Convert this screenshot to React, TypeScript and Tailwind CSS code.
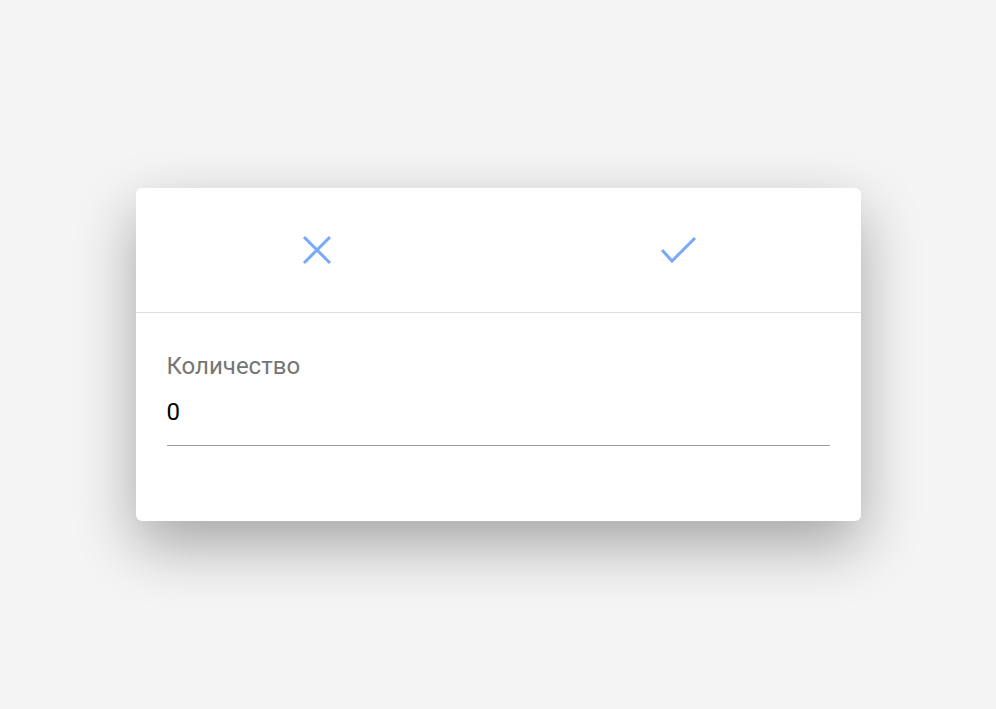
import React from "react";

export default function App() {
  return (
    <div
      className="w-full h-[709px] bg-[#f4f4f4] flex items-center justify-center"
      style={{ fontFamily: "Roboto, 'Noto Sans', sans-serif" }}
    >
      <div className="w-[725px] h-[333px] bg-white rounded-[6px] shadow-[0_24px_60px_rgba(0,0,0,0.32)] flex flex-col">
        <div className="h-[125px] flex border-b border-[#e0e0e0]">
          <button className="flex-1 flex items-center justify-center">
            <svg width="30" height="30" viewBox="0 0 30 30" fill="none" stroke="#7aa9fb" strokeWidth="3">
              <path d="M2 2L28 28M28 2L2 28" />
            </svg>
          </button>
          <button className="flex-1 flex items-center justify-center">
            <svg width="36" height="28" viewBox="0 0 36 28" fill="none" stroke="#7aa9fb" strokeWidth="3">
              <path d="M1 14L11 25L34 2" />
            </svg>
          </button>
        </div>
        <div className="px-[31px] pt-[38px]">
          <div className="text-[24px] leading-[30px] text-[#757575]">Количество</div>
          <div className="mt-[16px] text-[24px] leading-[30px] text-black pb-[18px] border-b border-[#9e9e9e]">0</div>
        </div>
      </div>
    </div>
  );
}
